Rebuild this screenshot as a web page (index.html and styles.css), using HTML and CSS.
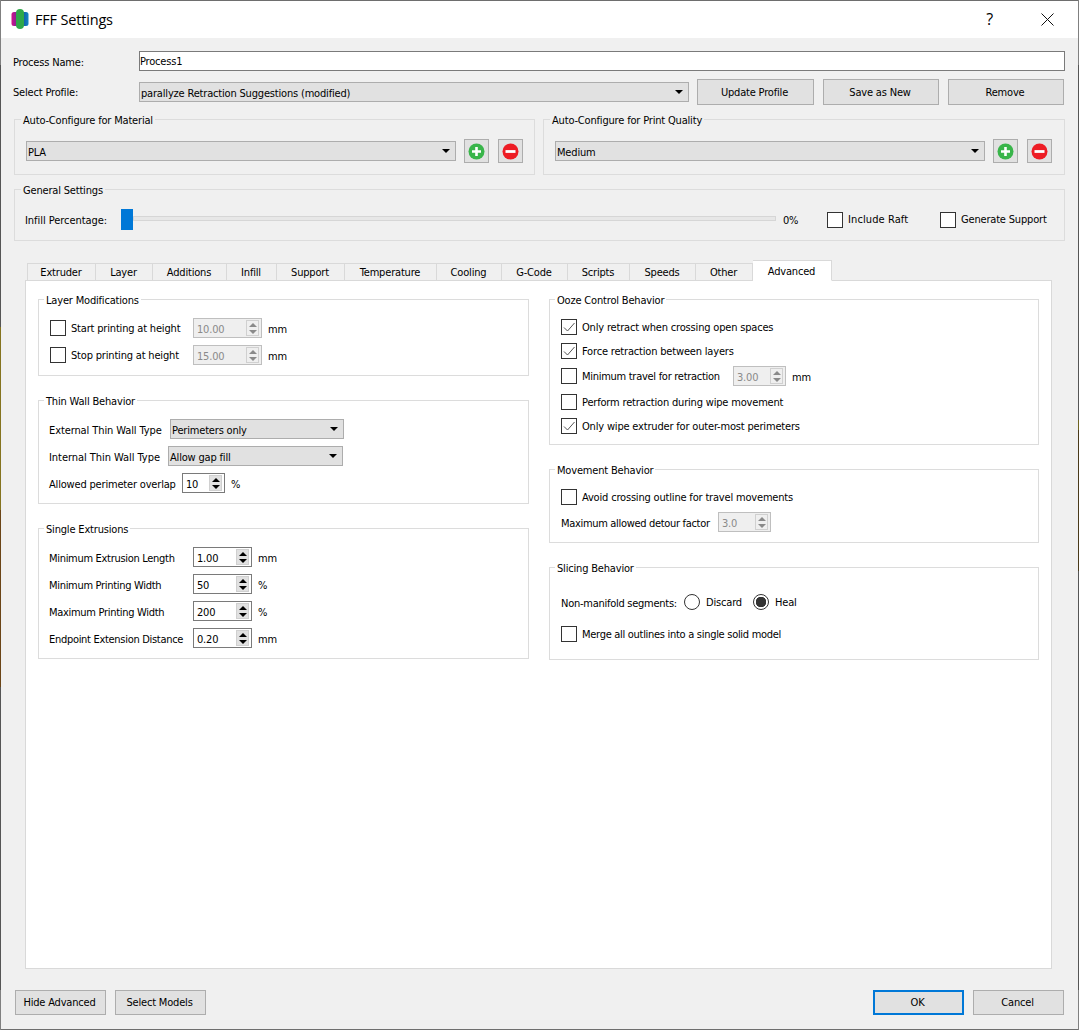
FILE: index.html
```html
<!DOCTYPE html>
<html lang="en">
<head>
  <meta charset="UTF-8">
  <title>FFF Settings</title>
  <link rel="stylesheet" href="styles.css">
</head>
<body>
  <div class="window">
    <div class="titlebar">
      <svg class="app-icon" width="18" height="20" viewBox="0 0 18 20">
        <defs>
          <linearGradient id="iconLeft" x1="0" x2="1" y1="0" y2="0"><stop offset="0" stop-color="#d0108a"/><stop offset="1" stop-color="#6a2a9a"/></linearGradient>
          <linearGradient id="iconRight" x1="0" x2="1" y1="0" y2="0"><stop offset="0" stop-color="#14509c"/><stop offset="1" stop-color="#1285c4"/></linearGradient>
        </defs>
        <rect x="0.5" y="3" width="7" height="14" rx="2.5" fill="url(#iconLeft)"/>
        <rect x="10.5" y="3" width="7" height="14" rx="2.5" fill="url(#iconRight)"/>
        <rect x="5" y="0" width="8" height="20" rx="4" fill="#2fa84a"/>
      </svg>
      <span class="title-text">FFF Settings</span>
      <span class="help-btn">?</span>
      <svg class="close-btn" width="13" height="13" viewBox="0 0 13 13">
        <path d="M0.5 0.5L12.5 12.5M12.5 0.5L0.5 12.5" stroke="#111" stroke-width="1" fill="none"/>
      </svg>
    </div>

    <div class="content">
      <div class="form-row name-row">
        <span class="form-label">Process Name:</span>
        <div class="text-input">Process1</div>
      </div>
      <div class="form-row profile-row">
        <span class="form-label">Select Profile:</span>
        <div class="combo profile-combo"><span>parallyze Retraction Suggestions (modified)</span><i class="caret"></i></div>
        <button class="btn profile-btn">Update Profile</button>
        <button class="btn profile-btn">Save as New</button>
        <button class="btn profile-btn">Remove</button>
      </div>

      <div class="auto-row">
        <div class="group auto-group">
          <div class="group-title">Auto-Configure for Material</div>
          <div class="auto-body">
            <div class="combo auto-combo"><span>PLA</span><i class="caret"></i></div>
            <button class="btn icon-btn">
              <svg width="17" height="17" viewBox="0 0 17 17"><circle cx="8.5" cy="8.5" r="8" fill="#39b54a"/><path d="M8.5 4v9M4 8.5h9" stroke="#fff" stroke-width="2.6"/></svg>
            </button>
            <button class="btn icon-btn">
              <svg width="17" height="17" viewBox="0 0 17 17"><circle cx="8.5" cy="8.5" r="8" fill="#ed1c24"/><path d="M3.5 8.5h10" stroke="#fff" stroke-width="2.8"/></svg>
            </button>
          </div>
        </div>
        <div class="group auto-group">
          <div class="group-title">Auto-Configure for Print Quality</div>
          <div class="auto-body">
            <div class="combo auto-combo"><span>Medium</span><i class="caret"></i></div>
            <button class="btn icon-btn">
              <svg width="17" height="17" viewBox="0 0 17 17"><circle cx="8.5" cy="8.5" r="8" fill="#39b54a"/><path d="M8.5 4v9M4 8.5h9" stroke="#fff" stroke-width="2.6"/></svg>
            </button>
            <button class="btn icon-btn">
              <svg width="17" height="17" viewBox="0 0 17 17"><circle cx="8.5" cy="8.5" r="8" fill="#ed1c24"/><path d="M3.5 8.5h10" stroke="#fff" stroke-width="2.8"/></svg>
            </button>
          </div>
        </div>
      </div>

      <div class="group general-group">
        <div class="group-title">General Settings</div>
        <div class="general-body">
          <span class="infill-label">Infill Percentage:</span>
          <i class="slider-handle"></i>
          <i class="slider-track"></i>
          <span class="infill-value">0%</span>
          <label class="check raft-check"><i class="box"></i>Include Raft</label>
          <label class="check"><i class="box"></i>Generate Support</label>
        </div>
      </div>

      <div class="tabs">
        <div class="tab tab-extruder">Extruder</div>
        <div class="tab tab-layer">Layer</div>
        <div class="tab tab-additions">Additions</div>
        <div class="tab tab-infill">Infill</div>
        <div class="tab tab-support">Support</div>
        <div class="tab tab-temp">Temperature</div>
        <div class="tab tab-cooling">Cooling</div>
        <div class="tab tab-gcode">G-Code</div>
        <div class="tab tab-scripts">Scripts</div>
        <div class="tab tab-speeds">Speeds</div>
        <div class="tab tab-other">Other</div>
        <div class="tab tab-advanced active">Advanced</div>
      </div>

      <div class="pane">
        <div class="column left-column">
          <div class="group layer-group">
            <div class="group-title">Layer Modifications</div>
            <div class="rows layer-rows">
              <div class="row">
                <label class="check height-check"><i class="box"></i>Start printing at height</label>
                <div class="spin disabled w69"><span>10.00</span><div class="arrows"><b class="up"></b><b class="down"></b></div></div>
                <span class="unit">mm</span>
              </div>
              <div class="row">
                <label class="check height-check"><i class="box"></i>Stop printing at height</label>
                <div class="spin disabled w69"><span>15.00</span><div class="arrows"><b class="up"></b><b class="down"></b></div></div>
                <span class="unit">mm</span>
              </div>
            </div>
          </div>

          <div class="group thin-group">
            <div class="group-title">Thin Wall Behavior</div>
            <div class="rows thin-rows">
              <div class="row">
                <span class="ext-label">External Thin Wall Type</span>
                <div class="combo ext-combo"><span>Perimeters only</span><i class="caret"></i></div>
              </div>
              <div class="row">
                <span class="int-label">Internal Thin Wall Type</span>
                <div class="combo int-combo"><span>Allow gap fill</span><i class="caret"></i></div>
              </div>
              <div class="row">
                <span class="overlap-label">Allowed perimeter overlap</span>
                <div class="spin w43"><span>10</span><div class="arrows"><b class="up"></b><b class="down"></b></div></div>
                <span class="unit">%</span>
              </div>
            </div>
          </div>

          <div class="group single-group">
            <div class="group-title">Single Extrusions</div>
            <div class="rows single-rows">
              <div class="row">
                <span class="single-label">Minimum Extrusion Length</span>
                <div class="spin w59"><span>1.00</span><div class="arrows"><b class="up"></b><b class="down"></b></div></div>
                <span class="unit">mm</span>
              </div>
              <div class="row">
                <span class="single-label">Minimum Printing Width</span>
                <div class="spin w59"><span>50</span><div class="arrows"><b class="up"></b><b class="down"></b></div></div>
                <span class="unit">%</span>
              </div>
              <div class="row">
                <span class="single-label">Maximum Printing Width</span>
                <div class="spin w59"><span>200</span><div class="arrows"><b class="up"></b><b class="down"></b></div></div>
                <span class="unit">%</span>
              </div>
              <div class="row">
                <span class="single-label">Endpoint Extension Distance</span>
                <div class="spin w59"><span>0.20</span><div class="arrows"><b class="up"></b><b class="down"></b></div></div>
                <span class="unit">mm</span>
              </div>
            </div>
          </div>
        </div>

        <div class="column right-column">
          <div class="group ooze-group">
            <div class="group-title">Ooze Control Behavior</div>
            <div class="rows ooze-rows">
              <label class="check tight-below"><i class="box on"><svg width="14" height="14" viewBox="0 0 14 14"><path d="M2 7.5L5.5 11L12.5 3" stroke="#555" fill="none"/></svg></i>Only retract when crossing open spaces</label>
              <label class="check"><i class="box on"><svg width="14" height="14" viewBox="0 0 14 14"><path d="M2 7.5L5.5 11L12.5 3" stroke="#555" fill="none"/></svg></i>Force retraction between layers</label>
              <div class="row loose-below">
                <label class="check travel-check"><i class="box"></i>Minimum travel for retraction</label>
                <div class="spin disabled w53"><span>3.00</span><div class="arrows"><b class="up"></b><b class="down"></b></div></div>
                <span class="unit">mm</span>
              </div>
              <label class="check tight-below"><i class="box"></i>Perform retraction during wipe movement</label>
              <label class="check"><i class="box on"><svg width="14" height="14" viewBox="0 0 14 14"><path d="M2 7.5L5.5 11L12.5 3" stroke="#555" fill="none"/></svg></i>Only wipe extruder for outer-most perimeters</label>
            </div>
          </div>

          <div class="group movement-group">
            <div class="group-title">Movement Behavior</div>
            <div class="rows movement-rows">
              <label class="check"><i class="box"></i>Avoid crossing outline for travel movements</label>
              <div class="row">
                <span class="detour-label">Maximum allowed detour factor</span>
                <div class="spin disabled w53"><span>3.0</span><div class="arrows"><b class="up"></b><b class="down"></b></div></div>
              </div>
            </div>
          </div>

          <div class="group slicing-group">
            <div class="group-title">Slicing Behavior</div>
            <div class="rows slicing-rows">
              <div class="row">
                <span class="manifold-label">Non-manifold segments:</span>
                <label class="radio discard-radio"><i class="dot"></i>Discard</label>
                <label class="radio"><i class="dot on"></i>Heal</label>
              </div>
              <label class="check merge-check"><i class="box"></i>Merge all outlines into a single solid model</label>
            </div>
          </div>
        </div>
      </div>

      <div class="footer">
        <button class="btn footer-btn">Hide Advanced</button>
        <button class="btn footer-btn">Select Models</button>
        <span class="spacer"></span>
        <button class="btn footer-btn default">OK</button>
        <button class="btn footer-btn">Cancel</button>
      </div>
    </div>
  </div>
</body>
</html>
```

FILE: styles.css
```css
* { box-sizing: border-box; }

body {
  margin: 0;
  font-family: "DejaVu Sans", Tahoma, sans-serif;
  font-stretch: condensed;
  font-size: 11px;
  letter-spacing: -0.18px;
  color: #000;
  background: #f0f0f0;
}

i, b { display: block; font-style: normal; }

/* 1px frame, the desktop behind tints the sides */
.window {
  width: 1079px;
  height: 1030px;
  padding: 1px;
  background-color: #6e6e6e;
  background-image:
    linear-gradient(#808080 65px, #555 65px, #555 327px, #85741f 327px, #85741f 510px, #6b4517 510px, #6b4517 687px, #555 687px, #555 990px, #808080 990px),
    linear-gradient(#808080 65px, #555 65px, #555 420px, #6e6320 420px, #6e6320 430px, #4a3a1a 430px, #4a3a1a 571px, #555 571px, #555 990px, #808080 990px);
  background-size: 1px 100%, 1px 100%;
  background-position: left top, right top;
  background-repeat: no-repeat;
  display: flex;
  flex-direction: column;
}

/* title bar */
.titlebar {
  height: 37px;
  flex: none;
  background: #fff;
  display: flex;
  align-items: center;
  padding: 0 0 1px 10px;
}
.app-icon { margin-right: 6px; }
.title-text { font-family: "Open Sans", sans-serif; font-stretch: normal; font-size: 14.5px; flex: 1; }
.help-btn { font-family: "Open Sans", sans-serif; font-stretch: normal; font-size: 16px; margin-right: 48px; }
.close-btn { margin-right: 24px; }

.content {
  flex: 1;
  padding: 0 13px;
  background: #f0f0f0;
  display: flex;
  flex-direction: column;
}

/* shared controls */
.btn {
  font: inherit;
  font-stretch: inherit;
  letter-spacing: inherit;
  color: #000;
  background: #e1e1e1;
  border: 1px solid #adadad;
  padding: 0;
  display: flex;
  align-items: center;
  justify-content: center;
}

.combo {
  height: 20px;
  background: #e1e1e1;
  border: 1px solid #adadad;
  display: flex;
  align-items: center;
  justify-content: space-between;
  padding: 0 5px 0 1px;
}
.combo span { margin-top: 2px; }
.caret {
  width: 0;
  height: 0;
  border-left: 4px solid transparent;
  border-right: 4px solid transparent;
  border-top: 4px solid #000;
}

.group { border: 1px solid #dcdcdc; padding: 0 11px; }
.group-title {
  width: fit-content;
  height: 16px;
  line-height: 16px;
  margin: -7px 0 0 -5px;
  padding: 0 2px;
  background: #f0f0f0;
}

.check, .radio { display: flex; align-items: center; height: 20px; white-space: nowrap; }
.box {
  width: 16px;
  height: 16px;
  flex: none;
  margin-right: 5px;
  background: #fff;
  border: 1px solid #333;
}
.box svg { display: block; margin: 0; }
.dot {
  width: 16px;
  height: 16px;
  flex: none;
  margin-right: 6px;
  border: 1px solid #333;
  border-radius: 50%;
  background: #fff;
}
.dot.on { background: radial-gradient(circle, #333 0, #333 5px, #fff 5.5px); }

.spin {
  height: 20px;
  background: #fff;
  border: 1px solid #7a7a7a;
  display: flex;
  align-items: center;
  justify-content: space-between;
  padding: 0 2px 0 3px;
}
.spin span { margin-top: 2px; }
.spin.disabled { background: #efefef; border-color: #bfbfbf; color: #8a8a8a; }
.w69 { width: 69px; }
.w59 { width: 59px; }
.w53 { width: 53px; }
.w43 { width: 43px; }

.arrows { width: 13px; height: 16px; display: flex; flex-direction: column; }
.arrows b {
  flex: 1;
  background: #e1e1e1;
  display: flex;
  align-items: center;
  justify-content: center;
}
.arrows b::after { content: ""; width: 0; height: 0; border-left: 4px solid transparent; border-right: 4px solid transparent; }
.arrows .up { border: 1px solid #d0d0d0; border-bottom: 0; }
.arrows .down { border: 1px solid #d0d0d0; border-top: 0; }
.arrows .up::after { border-bottom: 4px solid #000; }
.arrows .down::after { border-top: 4px solid #000; }
.spin.disabled .arrows b { background: #efefef; }
.spin.disabled .arrows .up::after { border-bottom-color: #8a8a8a; }
.spin.disabled .arrows .down::after { border-top-color: #8a8a8a; }

.unit { margin-left: 6px; }

/* top form */
.form-row { display: flex; align-items: center; }
.form-label { width: 126px; flex: none; margin-left: -1px; }
.name-row { margin-top: 13px; height: 20px; }
.name-row .form-label { margin-top: 2px; }
.text-input {
  flex: 1;
  height: 20px;
  background: #fff;
  border: 1px solid #7a7a7a;
  line-height: 20px;
}
.profile-row { margin-top: 8px; height: 26px; }
.profile-combo { width: 550px; margin-right: 8px; }
.profile-btn { width: 116px; height: 26px; margin-right: 9px; padding-right: 2px; }
.profile-btn:first-of-type { width: 117px; }
.profile-btn:last-child { margin-right: 0; }

.auto-row { display: flex; gap: 8px; margin-top: 14px; height: 56px; }
.auto-group { width: 522px; }
.auto-group:first-child { width: 521px; }
.auto-body { display: flex; align-items: center; margin-top: 10px; }
.auto-combo { width: 430px; margin-right: 8px; }
.icon-btn { width: 25px; height: 24px; margin-right: 9px; }
.icon-btn:last-child { margin-right: 0; }

.general-group { margin-top: 14px; height: 52px; }
.general-body { display: flex; align-items: center; height: 21px; margin: 10px 0 0 -1px; }
.infill-label { width: 96px; flex: none; margin-top: 1px; letter-spacing: -0.05px; }
.slider-handle { width: 12px; height: 21px; background: #0078d7; flex: none; }
.slider-track { width: 643px; height: 5px; background: #e7e7e7; border: 1px solid #d6d6d6; margin-top: -2px; flex: none; }
.infill-value { width: 51px; padding-left: 7px; flex: none; margin-top: 1px; }
.raft-check { width: 113px; letter-spacing: 0.1px; }

/* tabs */
.tabs { display: flex; align-items: flex-end; margin-top: 19px; height: 21px; padding-left: 13px; position: relative; z-index: 1; margin-bottom: -1px; }
.tab {
  height: 18px;
  border: 1px solid #d9d9d9;
  border-left: 0;
  background: #f0f0f0;
  display: flex;
  align-items: center;
  justify-content: center;
  padding-right: 1px;
}
.tab:first-child { border-left: 1px solid #d9d9d9; }
.tab.active { height: 21px; background: #fff; border-bottom-color: #fff; padding-top: 2px; }
.tab-extruder { width: 69px; }
.tab-layer { width: 57px; }
.tab-additions { width: 74px; }
.tab-infill { width: 50px; }
.tab-support { width: 68px; }
.tab-temp { width: 92px; }
.tab-cooling { width: 65px; }
.tab-gcode { width: 66px; }
.tab-scripts { width: 62px; }
.tab-speeds { width: 66px; }
.tab-other { width: 57px; }
.tab-advanced { width: 79px; }

.pane {
  margin-left: 11px;
  margin-right: 13px;
  height: 689px;
  background: #fff;
  border: 1px solid #d9d9d9;
  padding: 18px 12px 0;
  display: grid;
  grid-template-columns: 491px 490px;
  column-gap: 20px;
  align-items: start;
}
.column { display: flex; flex-direction: column; gap: 24px; }
.left-column .group { padding: 0 10px; }
.right-column .group-title { margin-left: -6px; }
.pane .group-title { background: #fff; }

.rows { display: flex; flex-direction: column; }
.row { display: flex; align-items: center; height: 20px; white-space: nowrap; }
.row > span { margin-top: 2px; }
.tight-below { margin-bottom: -1px; }
.loose-below { margin-bottom: 1px; }

.layer-group { height: 77px; }
.layer-rows { margin-top: 9px; gap: 7px; }
.height-check { width: 143px; flex: none; margin-left: 1px; }

.thin-group { height: 104px; }
.thin-rows { margin-top: 9px; gap: 7px; }
.ext-label { width: 121px; flex: none; letter-spacing: -0.1px; }
.ext-combo { width: 174px; }
.int-label { width: 119px; flex: none; letter-spacing: -0.05px; }
.int-combo { width: 175px; }
.overlap-label { width: 133px; flex: none; }

.single-group { height: 131px; }
.single-rows { margin-top: 9px; gap: 7px; }
.single-label { width: 144px; flex: none; letter-spacing: -0.3px; }

.ooze-group { height: 146px; }
.ooze-rows { margin-top: 8px; gap: 5px; }
.travel-check { width: 172px; flex: none; letter-spacing: -0.28px; }

.movement-group { height: 74px; }
.movement-rows { margin-top: 8px; gap: 5px; }
.detour-label { width: 157px; flex: none; letter-spacing: -0.32px; }

.slicing-group { height: 93px; }
.slicing-rows { margin-top: 15px; gap: 12px; }
.manifold-label { width: 123px; flex: none; letter-spacing: -0.26px; }
.discard-radio { width: 69px; }
.merge-check { letter-spacing: -0.29px; }

/* bottom buttons */
.footer { display: flex; gap: 9px; margin-top: 21px; padding: 0 1px; }
.spacer { flex: 1; }
.footer-btn { width: 91px; height: 25px; padding-right: 2px; }
.footer-btn.default { border: 2px solid #0078d7; }
```
